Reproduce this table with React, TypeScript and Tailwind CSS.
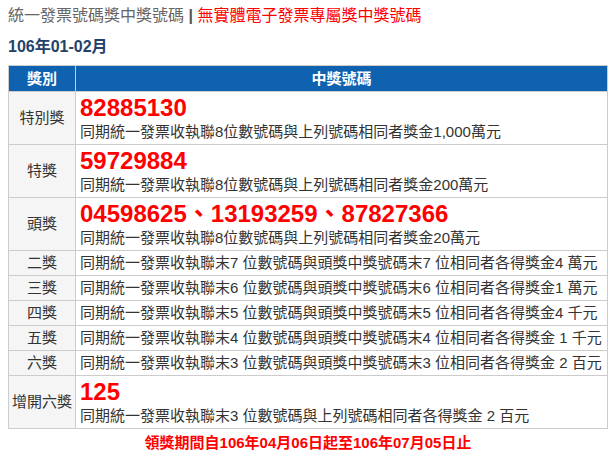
const prizes = [
  {
    name: "特別獎",
    numbers: "82885130",
    desc: "同期統一發票收執聯8位數號碼與上列號碼相同者獎金1,000萬元",
  },
  {
    name: "特獎",
    numbers: "59729884",
    desc: "同期統一發票收執聯8位數號碼與上列號碼相同者獎金200萬元",
  },
  {
    name: "頭獎",
    numbers: "04598625、13193259、87827366",
    desc: "同期統一發票收執聯8位數號碼與上列號碼相同者獎金20萬元",
  },
  { name: "二獎", desc: "同期統一發票收執聯末7 位數號碼與頭獎中獎號碼末7 位相同者各得獎金4 萬元" },
  { name: "三獎", desc: "同期統一發票收執聯末6 位數號碼與頭獎中獎號碼末6 位相同者各得獎金1 萬元" },
  { name: "四獎", desc: "同期統一發票收執聯末5 位數號碼與頭獎中獎號碼末5 位相同者各得獎金4 千元" },
  { name: "五獎", desc: "同期統一發票收執聯末4 位數號碼與頭獎中獎號碼末4 位相同者各得獎金 1 千元" },
  { name: "六獎", desc: "同期統一發票收執聯末3 位數號碼與頭獎中獎號碼末3 位相同者各得獎金 2 百元" },
  {
    name: "增開六獎",
    numbers: "125",
    desc: "同期統一發票收執聯末3 位數號碼與上列號碼相同者各得獎金 2 百元",
  },
]

export default function App() {
  return (
    <div
      className="w-[614px] h-[454px] bg-white px-2 pt-[4px] text-[#333]"
      style={{ fontFamily: '"Liberation Sans", "Noto Sans CJK TC", sans-serif' }}
    >
      {/* Title */}
      <h1 className="text-[16px] leading-[24px] font-normal text-[#666]">
        統一發票號碼獎中獎號碼 <span className="font-bold text-[#555]">|</span>{" "}
        <span className="text-[#ff0000]">無實體電子發票專屬獎中獎號碼</span>
      </h1>
      <h2 className="mt-[7px] text-[16px] leading-[24px] font-bold text-[#23426b]">106年01-02月</h2>

      {/* Prize table */}
      <table className="mt-[6px] w-[600px] border-collapse text-[15px]">
        <thead>
          <tr className="bg-[#0e62b0] text-white">
            <th className="w-[67px] h-[26px] border border-[#ccc] p-0 text-[15px] font-bold leading-[20px]">獎別</th>
            <th className="h-[26px] border border-[#ccc] p-0 text-[15px] font-bold leading-[20px]">中獎號碼</th>
          </tr>
        </thead>
        <tbody>
          {prizes.map((p) => (
            <tr key={p.name}>
              <td className="border border-[#ccc] bg-[#f5f5f5] p-0 text-center leading-[20px]">{p.name}</td>
              {p.numbers ? (
                <td className="h-[53px] border border-[#ccc] px-[4px] pt-[3px] pb-[2px] align-middle">
                  <div className="text-[24px] font-bold leading-[26px] text-[#ff0000]">{p.numbers}</div>
                  <div className="leading-[21px]">{p.desc}</div>
                </td>
              ) : (
                <td className="h-[25px] border border-[#ccc] px-[4px] py-0 leading-[20px]">{p.desc}</td>
              )}
            </tr>
          ))}
        </tbody>
      </table>

      <p className="mt-[4px] w-[600px] text-center text-[15px] font-bold leading-[20px] text-[#ff0000]">
        領獎期間自106年04月06日起至106年07月05日止
      </p>
    </div>
  )
}
